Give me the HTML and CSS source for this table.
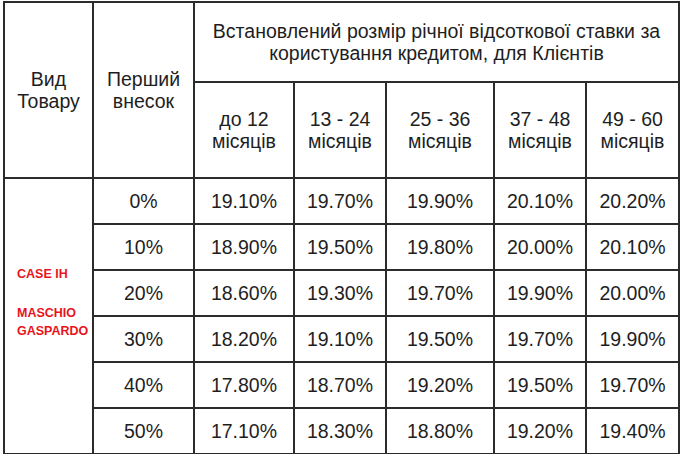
FILE: index.html
```html
<!DOCTYPE html>
<html lang="uk">
<head>
<meta charset="utf-8">
<link rel="stylesheet" href="styles.css">
</head>
<body>
<table class="rates">
  <colgroup>
    <col class="c-kind">
    <col class="c-down">
    <col class="c-m1">
    <col class="c-m2">
    <col class="c-m3">
    <col class="c-m4">
    <col class="c-m5">
  </colgroup>
  <thead>
    <tr class="h1">
      <th rowspan="2">Вид<br>Товару</th>
      <th rowspan="2">Перший<br>внесок</th>
      <th colspan="5">Встановлений розмір річної відсоткової ставки за<br>користування кредитом, для Клієнтів</th>
    </tr>
    <tr class="h2">
      <th>до 12<br>місяців</th>
      <th>13 - 24<br>місяців</th>
      <th>25 - 36<br>місяців</th>
      <th>37 - 48<br>місяців</th>
      <th>49 - 60<br>місяців</th>
    </tr>
  </thead>
  <tbody>
    <tr>
      <td rowspan="6" class="brand"><div class="brand-text"><p class="brand-line">CASE IH</p><p class="brand-line">MASCHIO<br>GASPARDO</p></div></td>
      <td>0%</td><td>19.10%</td><td>19.70%</td><td>19.90%</td><td>20.10%</td><td>20.20%</td>
    </tr>
    <tr><td>10%</td><td>18.90%</td><td>19.50%</td><td>19.80%</td><td>20.00%</td><td>20.10%</td></tr>
    <tr><td>20%</td><td>18.60%</td><td>19.30%</td><td>19.70%</td><td>19.90%</td><td>20.00%</td></tr>
    <tr><td>30%</td><td>18.20%</td><td>19.10%</td><td>19.50%</td><td>19.70%</td><td>19.90%</td></tr>
    <tr><td>40%</td><td>17.80%</td><td>18.70%</td><td>19.20%</td><td>19.50%</td><td>19.70%</td></tr>
    <tr><td>50%</td><td>17.10%</td><td>18.30%</td><td>18.80%</td><td>19.20%</td><td>19.40%</td></tr>
  </tbody>
</table>
</body>
</html>
```

FILE: styles.css
```css
html, body {
  margin: 0;
  background: #ffffff;
}
body {
  padding: 1px 0 0 3px;
  font-family: "Liberation Sans", Arial, sans-serif;
  color: #1e1e1e;
}
.rates {
  border-collapse: collapse;
  table-layout: fixed;
  width: 675px;
  font-size: 19.5px;
  line-height: 22px;
}
.rates th, .rates td {
  border: 2px solid #2b2b2b;
  padding: 0;
  text-align: center;
  vertical-align: middle;
  font-weight: normal;
}
.c-kind { width: 89px; }
.c-down { width: 101px; }
.c-m1 { width: 100px; }
.c-m2 { width: 92px; }
.c-m3 { width: 108px; }
.c-m4 { width: 92px; }
.c-m5 { width: 93px; }
.h1 { height: 80px; }
.h2 { height: 96px; }
.rates tbody tr { height: 46px; }
.rates td.brand {
  vertical-align: top;
  text-align: left;
}
.brand-text {
  padding: 86px 0 0 12px;
  font-family: "Liberation Sans", Arial, sans-serif;
  font-weight: bold;
  font-size: 12.5px;
  line-height: 18px;
  color: #e8141c;
}
.brand-line {
  margin: 0 0 21px;
}
```
